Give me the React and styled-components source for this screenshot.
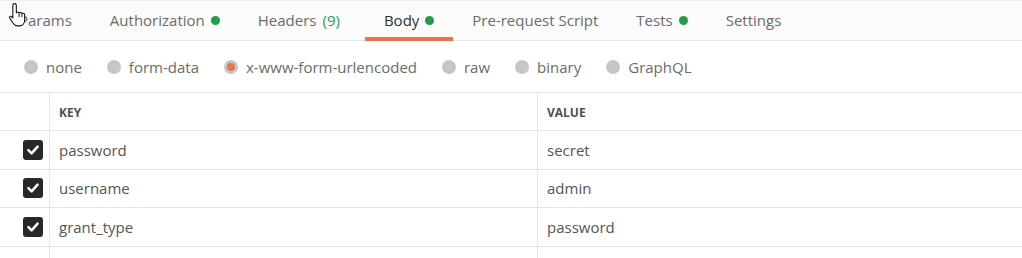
import styled, { createGlobalStyle } from "styled-components";

const GlobalStyle = createGlobalStyle`
  body {
    margin: 0;
    background: #ffffff;
    font-family: "Open Sans", "Liberation Sans", sans-serif;
  }
`;

const tabs = [
  { label: "Params" },
  { label: "Authorization", dot: true },
  { label: "Headers", count: 9 },
  { label: "Body", dot: true, active: true },
  { label: "Pre-request Script" },
  { label: "Tests", dot: true },
  { label: "Settings" },
];

const bodyTypes = [
  { label: "none" },
  { label: "form-data" },
  { label: "x-www-form-urlencoded", selected: true },
  { label: "raw" },
  { label: "binary" },
  { label: "GraphQL" },
];

const rows = [
  { key: "password", value: "secret" },
  { key: "username", value: "admin" },
  { key: "grant_type", value: "password" },
];

const App = () => {
  return (
    <>
      <GlobalStyle />
      <Page>
        <TabBar>
          {tabs.map((t) => (
            <Tab key={t.label} $active={t.active} $wide={!!t.count}>
              {t.label}
              {t.count && <Count>({t.count})</Count>}
              {t.dot && <Dot />}
            </Tab>
          ))}
        </TabBar>

        <RadioRow>
          {bodyTypes.map((b) => (
            <RadioItem key={b.label}>
              <Radio $selected={b.selected} />
              {b.label}
            </RadioItem>
          ))}
        </RadioRow>

        <Table>
          <Row $header>
            <CheckCell />
            <Cell>
              <HeadText>KEY</HeadText>
            </Cell>
            <Cell>
              <HeadText>VALUE</HeadText>
            </Cell>
          </Row>
          {rows.map((r) => (
            <Row key={r.key}>
              <CheckCell>
                <Checkbox>
                  <svg width="14" height="14" viewBox="0 0 14 14">
                    <path
                      d="M2.4 7.2 L5.6 10.3 L11.6 3.7"
                      fill="none"
                      stroke="#fff"
                      strokeWidth="2.5"
                      strokeLinecap="round"
                      strokeLinejoin="round"
                    />
                  </svg>
                </Checkbox>
              </CheckCell>
              <Cell>{r.key}</Cell>
              <Cell>{r.value}</Cell>
            </Row>
          ))}
          <Row $last>
            <CheckCell />
            <Cell />
            <Cell />
          </Row>
        </Table>

        <Cursor width="24" height="26" viewBox="0 0 22 24">
          <path
            d="M6 1.5 C7 1.5 7.6 2.2 7.6 3.2 V10 C8 9 9.8 9 10.2 10.3 C10.7 9.4 12.5 9.4 12.8 10.8 C13.3 10 15.2 10.2 15.3 11.6 V16.5 C15.3 19.5 13.5 22 10.5 22 H8.8 C6.8 22 5.6 21 4.6 19.6 L1.6 15 C0.9 14 1.6 12.8 2.8 13.2 L4.4 14.6 V3.2 C4.4 2.2 5 1.5 6 1.5 Z"
            fill="#fff"
            stroke="#111"
            strokeWidth="1"
            strokeLinejoin="round"
          />
          <path d="M10.2 10.3 V14 M12.8 10.8 V14" stroke="#111" strokeWidth="0.9" />
        </Cursor>
      </Page>
    </>
  );
};

const Page = styled.div`
  position: relative;
  width: 1022px;
  height: 258px;
  overflow: hidden;
  background: #fff;
`;

const TabBar = styled.div`
  display: flex;
  height: 41px;
  border-top: 1px solid #ececec;
  border-bottom: 1px solid #e6e6e6;
  box-sizing: border-box;
  background: #fbfbfb;
`;

const Tab = styled.div`
  display: flex;
  align-items: center;
  padding: 2px ${(p) => (p.$wide ? "25px" : "19px")} 0 19px;
  height: 40px;
  box-sizing: border-box;
  font-size: 15px;
  color: ${(p) => (p.$active ? "#303030" : "#6b6b6b")};
  border-bottom: 4px solid ${(p) => (p.$active ? "#e8744b" : "transparent")};
  cursor: pointer;
`;

const Count = styled.span`
  margin-left: 6px;
  color: #2a9d4e;
`;

const Dot = styled.span`
  width: 9px;
  height: 9px;
  margin-left: 6px;
  border-radius: 50%;
  background: #1f9d4c;
`;

const RadioRow = styled.div`
  display: flex;
  align-items: center;
  gap: 25px;
  height: 51px;
  padding: 1px 0 0 24px;
  box-sizing: border-box;
`;

const RadioItem = styled.label`
  display: flex;
  align-items: center;
  gap: 8px;
  font-size: 15px;
  color: #6b6b6b;
`;

const Radio = styled.span`
  width: 14px;
  height: 14px;
  border-radius: 50%;
  box-sizing: border-box;
  background: ${(p) => (p.$selected ? "#e8744b" : "#c6c6c6")};
  border: ${(p) => (p.$selected ? "3px solid #c6c6c6" : "none")};
`;

const Table = styled.div`
  border-top: 1px solid #e4e4e4;
`;

const Row = styled.div`
  display: grid;
  grid-template-columns: 49px 488px 1fr;
  height: ${(p) => (p.$header ? "37px" : "37.5px")};
  border-bottom: ${(p) => (p.$last ? "none" : "1px solid #e4e4e4")};
`;

const Cell = styled.div`
  display: flex;
  align-items: center;
  padding-left: 9px;
  border-left: 1px solid #e8e8e8;
  font-size: 15px;
  color: #555;
`;

const CheckCell = styled.div`
  display: flex;
  align-items: center;
  padding-left: 23px;
`;

const HeadText = styled.span`
  font-size: 12px;
  font-weight: 700;
  color: #4f4f4f;
  padding-top: 1px;
`;

const Checkbox = styled.span`
  display: flex;
  align-items: center;
  justify-content: center;
  width: 20px;
  height: 20px;
  border-radius: 3px;
  background: #282828;
`;

const Cursor = styled.svg`
  position: absolute;
  left: 8px;
  top: 2px;
`;

export default App;
